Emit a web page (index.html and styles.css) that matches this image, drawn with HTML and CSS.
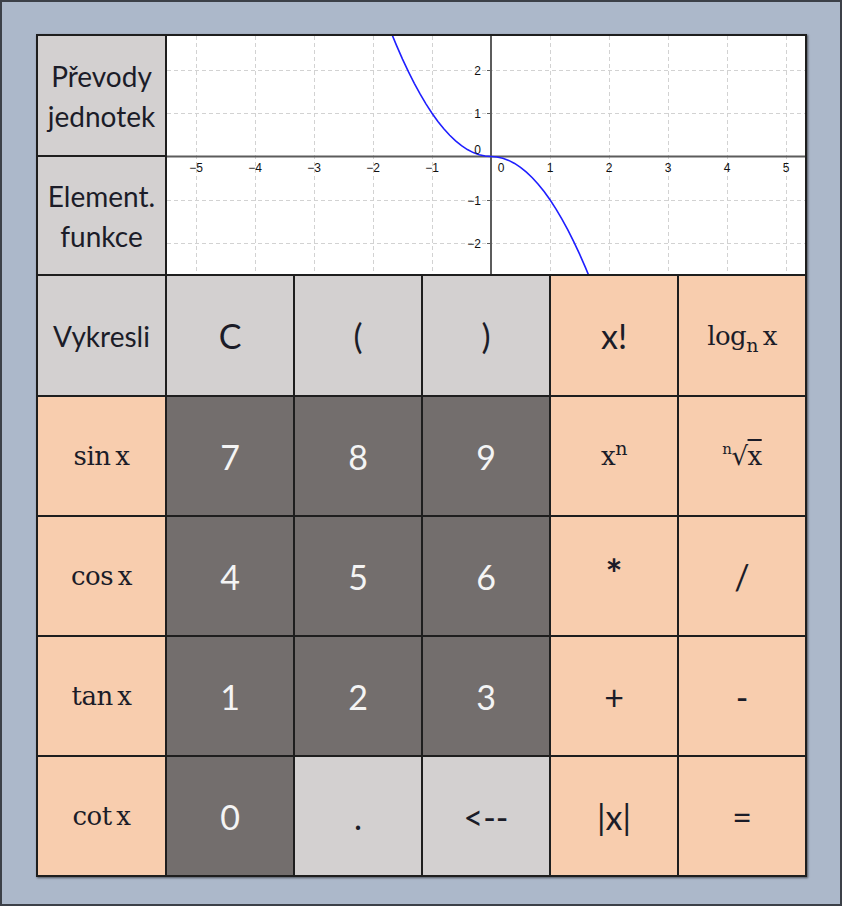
FILE: index.html
```html
<!DOCTYPE html>
<html lang="cs">
<head>
<meta charset="utf-8">
<title>Kalkulačka</title>
<link rel="stylesheet" href="styles.css">
</head>
<body>
<div class="window">
  <div class="panel">
    <div class="cell gray label">Převody<br>jednotek</div>
    <div class="graph">
      <svg width="638" height="238" viewBox="0 0 638 238" xmlns="http://www.w3.org/2000/svg">
        <g stroke="#d2d2d2" stroke-width="1" stroke-dasharray="4 3">
          <line x1="29.5" y1="0" x2="29.5" y2="238"/>
          <line x1="88.5" y1="0" x2="88.5" y2="238"/>
          <line x1="147.5" y1="0" x2="147.5" y2="238"/>
          <line x1="206.5" y1="0" x2="206.5" y2="238"/>
          <line x1="265.5" y1="0" x2="265.5" y2="238"/>
          <line x1="383.5" y1="0" x2="383.5" y2="238"/>
          <line x1="442.5" y1="0" x2="442.5" y2="238"/>
          <line x1="501.5" y1="0" x2="501.5" y2="238"/>
          <line x1="560.5" y1="0" x2="560.5" y2="238"/>
          <line x1="619.5" y1="0" x2="619.5" y2="238"/>
          <line x1="0" y1="34.5" x2="638" y2="34.5"/>
          <line x1="0" y1="77.5" x2="638" y2="77.5"/>
          <line x1="0" y1="164.5" x2="638" y2="164.5"/>
          <line x1="0" y1="207.5" x2="638" y2="207.5"/>
        </g>
        <g stroke="#5c5c5c" stroke-width="2">
          <line x1="0" y1="120.5" x2="638" y2="120.5"/>
          <line x1="324" y1="0" x2="324" y2="238"/>
        </g>
        <g stroke="#5c5c5c" stroke-width="1">
          <line x1="320" y1="34.5" x2="324" y2="34.5"/>
          <line x1="320" y1="77.5" x2="324" y2="77.5"/>
          <line x1="320" y1="164.5" x2="324" y2="164.5"/>
          <line x1="320" y1="207.5" x2="324" y2="207.5"/>
        </g>
        <polyline fill="none" stroke="#1f1fff" stroke-width="1.6" points="223.7,-4.6 229.6,9.65 235.5,23.07 241.4,35.63 247.3,47.32 253.2,58.15 259.1,68.11 265,77.2 270.9,85.43 276.8,92.79 282.7,99.28 288.6,104.91 294.5,109.67 300.4,113.57 306.3,116.6 312.2,118.77 318.1,120.07 324,120.5 329.9,120.93 335.8,122.23 341.7,124.4 347.6,127.43 353.5,131.33 359.4,136.09 365.3,141.72 371.2,148.21 377.1,155.57 383,163.8 388.9,172.89 394.8,182.85 400.7,193.68 406.6,205.37 412.5,217.93 418.4,231.35 424.3,245.64"/>
        <g class="ticks" text-anchor="middle">
          <text x="29" y="136">−5</text>
          <text x="88" y="136">−4</text>
          <text x="147" y="136">−3</text>
          <text x="206" y="136">−2</text>
          <text x="265" y="136">−1</text>
          <text x="334" y="136">0</text>
          <text x="383" y="136">1</text>
          <text x="442" y="136">2</text>
          <text x="501" y="136">3</text>
          <text x="560" y="136">4</text>
          <text x="619" y="136">5</text>
        </g>
        <g class="ticks" text-anchor="end">
          <text x="314" y="39">2</text>
          <text x="314" y="82">1</text>
          <text x="314" y="118">0</text>
          <text x="314" y="169">−1</text>
          <text x="314" y="212">−2</text>
        </g>
      </svg>
    </div>
    <div class="cell gray label">Element.<br>funkce</div>

    <div class="cell gray label">Vykresli</div>
    <div class="cell gray big">C</div>
    <div class="cell gray big">(</div>
    <div class="cell gray big">)</div>
    <div class="cell peach big">x!</div>
    <div class="cell peach math"><span>log<sub class="lo">n</sub>&#8201;x</span></div>

    <div class="cell peach math">sin&#8201;x</div>
    <div class="cell dark big">7</div>
    <div class="cell dark big">8</div>
    <div class="cell dark big">9</div>
    <div class="cell peach math"><span>x<sup class="hi">n</sup></span></div>
    <div class="cell peach math"><span class="root"><sup class="idx">n</sup>√<span class="ov">x</span></span></div>

    <div class="cell peach math">cos&#8201;x</div>
    <div class="cell dark big">4</div>
    <div class="cell dark big">5</div>
    <div class="cell dark big">6</div>
    <div class="cell peach big star">*</div>
    <div class="cell peach big">/</div>

    <div class="cell peach math">tan&#8201;x</div>
    <div class="cell dark big">1</div>
    <div class="cell dark big">2</div>
    <div class="cell dark big">3</div>
    <div class="cell peach big">+</div>
    <div class="cell peach big">-</div>

    <div class="cell peach math">cot&#8201;x</div>
    <div class="cell dark big">0</div>
    <div class="cell gray big">.</div>
    <div class="cell gray big">&lt;--</div>
    <div class="cell peach big">|x|</div>
    <div class="cell peach big">=</div>
  </div>
</div>
</body>
</html>
```

FILE: styles.css
```css
html, body {
  margin: 0;
  padding: 0;
}

body {
  width: 842px;
  height: 906px;
  overflow: hidden;
  background: #acb8ca;
}

.window {
  box-sizing: border-box;
  width: 842px;
  height: 906px;
  border: 2px solid #3c4048;
  background: #acb8ca;
  padding: 32px 0 0 34px;
}

.panel {
  display: grid;
  grid-template-columns: 127px repeat(5, 126px);
  grid-template-rows: 119px 117px 119px repeat(4, 118px);
  gap: 2px;
  padding: 2px;
  width: max-content;
  background: #1e1e1e;
  box-shadow: 1px 1px 2px rgba(0, 0, 0, 0.55);
}

.cell {
  display: flex;
  align-items: center;
  justify-content: center;
  text-align: center;
  color: #1b1c28;
}

.gray { background: #d3d0d0; }
.dark { background: #736e6d; color: #f4f4f4; }
.peach { background: #f8cdae; }

.label {
  font-family: Lato, "Open Sans", sans-serif;
  font-size: 28px;
  line-height: 40px;
}

.big {
  font-family: Lato, "Open Sans", sans-serif;
  font-size: 34px;
}

.star {
  font-size: 40px;
  font-weight: 700;
  padding-bottom: 4px;
}

.math {
  font-family: "DejaVu Serif", "Liberation Serif", serif;
  font-size: 26px;
  letter-spacing: -0.5px;
}

.lo {
  position: relative;
  top: 7px;
  font-size: 19px;
  vertical-align: baseline;
  line-height: 0;
}

.hi {
  position: relative;
  top: -10px;
  font-size: 19px;
  vertical-align: baseline;
  line-height: 0;
}

.root {
  white-space: nowrap;
}

.idx {
  position: relative;
  top: -11px;
  font-size: 15px;
  vertical-align: baseline;
  line-height: 0;
  margin-right: 0;
}

.ov {
  text-decoration: overline;
}

.graph {
  grid-column: 2 / 7;
  grid-row: 1 / 3;
  background: #ffffff;
  overflow: hidden;
}

.graph svg {
  display: block;
}

.ticks {
  font-family: "Liberation Sans", Arial, sans-serif;
  font-size: 12px;
  fill: #111111;
}
```
